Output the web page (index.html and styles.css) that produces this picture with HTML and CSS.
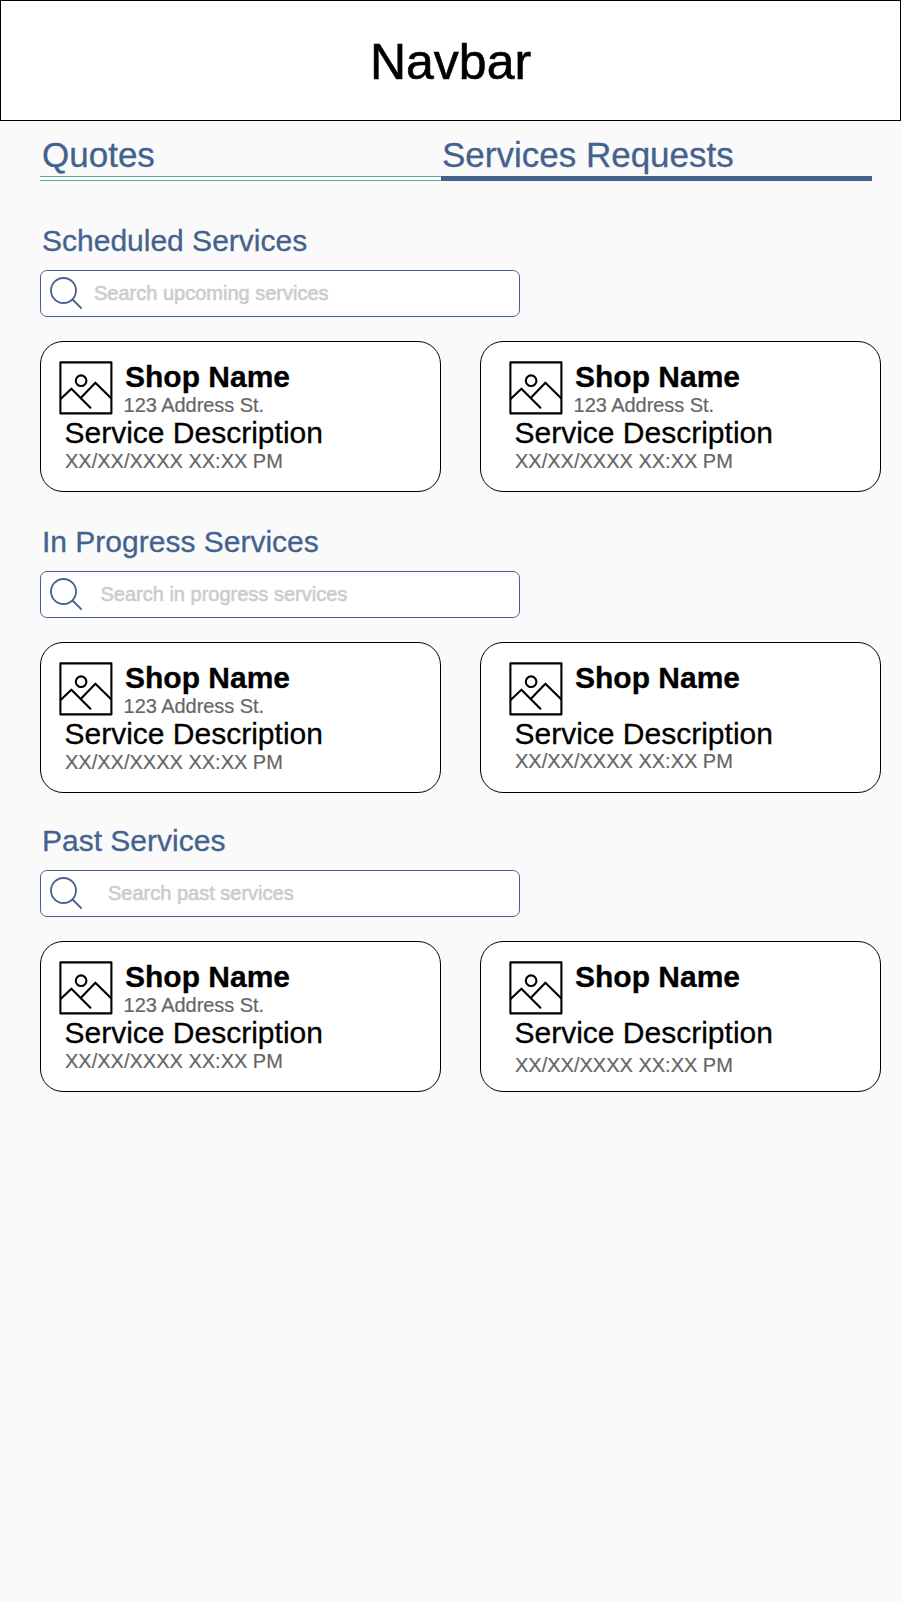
FILE: index.html
```
<!DOCTYPE html>
<html lang="en">
<head>
<meta charset="utf-8">
<title>Services Requests</title>
<link rel="stylesheet" href="styles.css">
</head>
<body>
<svg class="defs" width="0" height="0" aria-hidden="true">
  <symbol id="picture" viewBox="0 0 54 54">
    <g transform="translate(.4 .4)" fill="none" stroke="currentColor" stroke-width="2.1" stroke-linecap="round" stroke-linejoin="round">
      <rect x="1" y="1" width="51" height="51"/>
      <circle cx="21.7" cy="19.3" r="5.3"/>
      <path d="M1.5 37.3 12 27.3 31 46.3M21.5 36.3 36 21.3 51.5 36.7"/>
    </g>
  </symbol>
  <symbol id="search" viewBox="0 0 34 34">
    <g fill="none" stroke="currentColor" stroke-width="1.8">
      <circle cx="13.5" cy="13.5" r="12.5"/>
      <path d="M22.5 22.5 31.7 31.7"/>
    </g>
  </symbol>
</svg>
<header class="navbar"><h1 class="navbar-title">Navbar</h1></header>
<nav class="tabs">
  <a class="tab">Quotes</a>
  <a class="tab tab-active"><span class="tab-label">Services Requests</span></a>
</nav>
<main class="sections">
  <section class="section">
    <h2 class="heading">Scheduled Services</h2>
    <div class="search"><svg class="search-icon"><use href="#search"/></svg><span class="hint hint-upcoming">Search upcoming services</span></div>
    <div class="cards">
      <article class="card">
        <div class="shop"><svg class="picture"><use href="#picture"/></svg><div><h3 class="name">Shop Name</h3><p class="address">123 Address St.</p></div></div>
        <p class="description">Service Description</p><p class="date">XX/XX/XXXX XX:XX PM</p>
      </article>
      <article class="card card-inset">
        <div class="shop"><svg class="picture"><use href="#picture"/></svg><div><h3 class="name">Shop Name</h3><p class="address">123 Address St.</p></div></div>
        <p class="description">Service Description</p><p class="date">XX/XX/XXXX XX:XX PM</p>
      </article>
    </div>
  </section>
  <section class="section section-progress">
    <h2 class="heading">In Progress Services</h2>
    <div class="search"><svg class="search-icon"><use href="#search"/></svg><span class="hint hint-progress">Search in progress services</span></div>
    <div class="cards">
      <article class="card">
        <div class="shop"><svg class="picture"><use href="#picture"/></svg><div><h3 class="name">Shop Name</h3><p class="address">123 Address St.</p></div></div>
        <p class="description">Service Description</p><p class="date">XX/XX/XXXX XX:XX PM</p>
      </article>
      <article class="card card-inset">
        <div class="shop"><svg class="picture"><use href="#picture"/></svg><div><h3 class="name">Shop Name</h3></div></div>
        <p class="description">Service Description</p><p class="date date-tight">XX/XX/XXXX XX:XX PM</p>
      </article>
    </div>
  </section>
  <section class="section">
    <h2 class="heading">Past Services</h2>
    <div class="search"><svg class="search-icon"><use href="#search"/></svg><span class="hint hint-past">Search past services</span></div>
    <div class="cards">
      <article class="card">
        <div class="shop"><svg class="picture"><use href="#picture"/></svg><div><h3 class="name">Shop Name</h3><p class="address">123 Address St.</p></div></div>
        <p class="description">Service Description</p><p class="date">XX/XX/XXXX XX:XX PM</p>
      </article>
      <article class="card card-inset">
        <div class="shop"><svg class="picture"><use href="#picture"/></svg><div><h3 class="name">Shop Name</h3></div></div>
        <p class="description">Service Description</p><p class="date date-loose">XX/XX/XXXX XX:XX PM</p>
      </article>
    </div>
  </section>
</main>
</body>
</html>
```
FILE: styles.css
```
* { box-sizing: border-box; }
body { margin: 0; min-height: 1602px; background: #fafafa; color: #000; font-family: "Liberation Sans", Arial, sans-serif; -webkit-text-stroke: 0.3px; }
h1, h2, h3, p { margin: 0; font-weight: 400; }
.defs { display: block; }

.navbar { height: 121px; display: flex; align-items: center; justify-content: center; border: 1px solid #000; background: #fff; }
.navbar-title { font-size: 50px; line-height: 58px; padding-top: 2px; -webkit-text-stroke-width: 0.6px; }

.tabs { display: grid; grid-template-columns: 400.7px 431px; padding: 13px 0 0 40px; }
.tab { height: 47px; padding-left: 2px; font-size: 35px; line-height: 41px; color: #43628d; white-space: nowrap;
  background: linear-gradient(#5bab8f 1px, #fff 1px, #fff 4px, #5bab8f 4px) bottom / 100% 5px no-repeat; }
.tab-active { padding-left: 1.3px; background: linear-gradient(#43628d, #43628d) bottom / 100% 5px no-repeat; }

.sections { padding: 43px 0 0 40px; }
.section { height: 301px; }
.section-progress { height: 299px; }
.heading { padding-left: 2px; font-size: 30px; line-height: 34px; color: #43628d; }
.search { display: flex; width: 480px; height: 47px; margin-top: 12px; padding: 6px 0 0 9px; border: 1px solid #43628d; border-radius: 7px; background: #fff; color: #43628d; }
.search-icon { flex: none; width: 34px; height: 34px; }
.hint { padding-top: 5px; font-size: 20px; line-height: 22px; color: #ccc; -webkit-text-stroke: 0.6px #ccc; }
.hint-upcoming { padding-left: 10px; }
.hint-progress { padding-left: 16.5px; }
.hint-past { padding-left: 24px; }

.cards { display: flex; gap: 39px; margin-top: 24px; }
.card { width: 401px; height: 151px; padding: 18px 0 0 18px; border: 1px solid #000; border-radius: 23px; background: #fff; }
.card-inset { padding-left: 28px; }
.shop { display: flex; height: 56px; }
.picture { flex: none; width: 54px; height: 54px; margin: 1px 12px 0 0; }
.name { font-size: 30px; line-height: 34px; font-weight: 700; }
.address { margin-left: -1.4px; font-size: 20px; line-height: 22px; letter-spacing: -0.05px; color: #666; -webkit-text-stroke: 0.2px #666; }
.description { padding-left: 5.5px; font-size: 30px; line-height: 34px; }
.date { padding-left: 6px; font-size: 20px; line-height: 22px; color: #666; -webkit-text-stroke: 0.2px #666; }
.date-tight { margin-top: -1px; }
.date-loose { margin-top: 4px; }
```
